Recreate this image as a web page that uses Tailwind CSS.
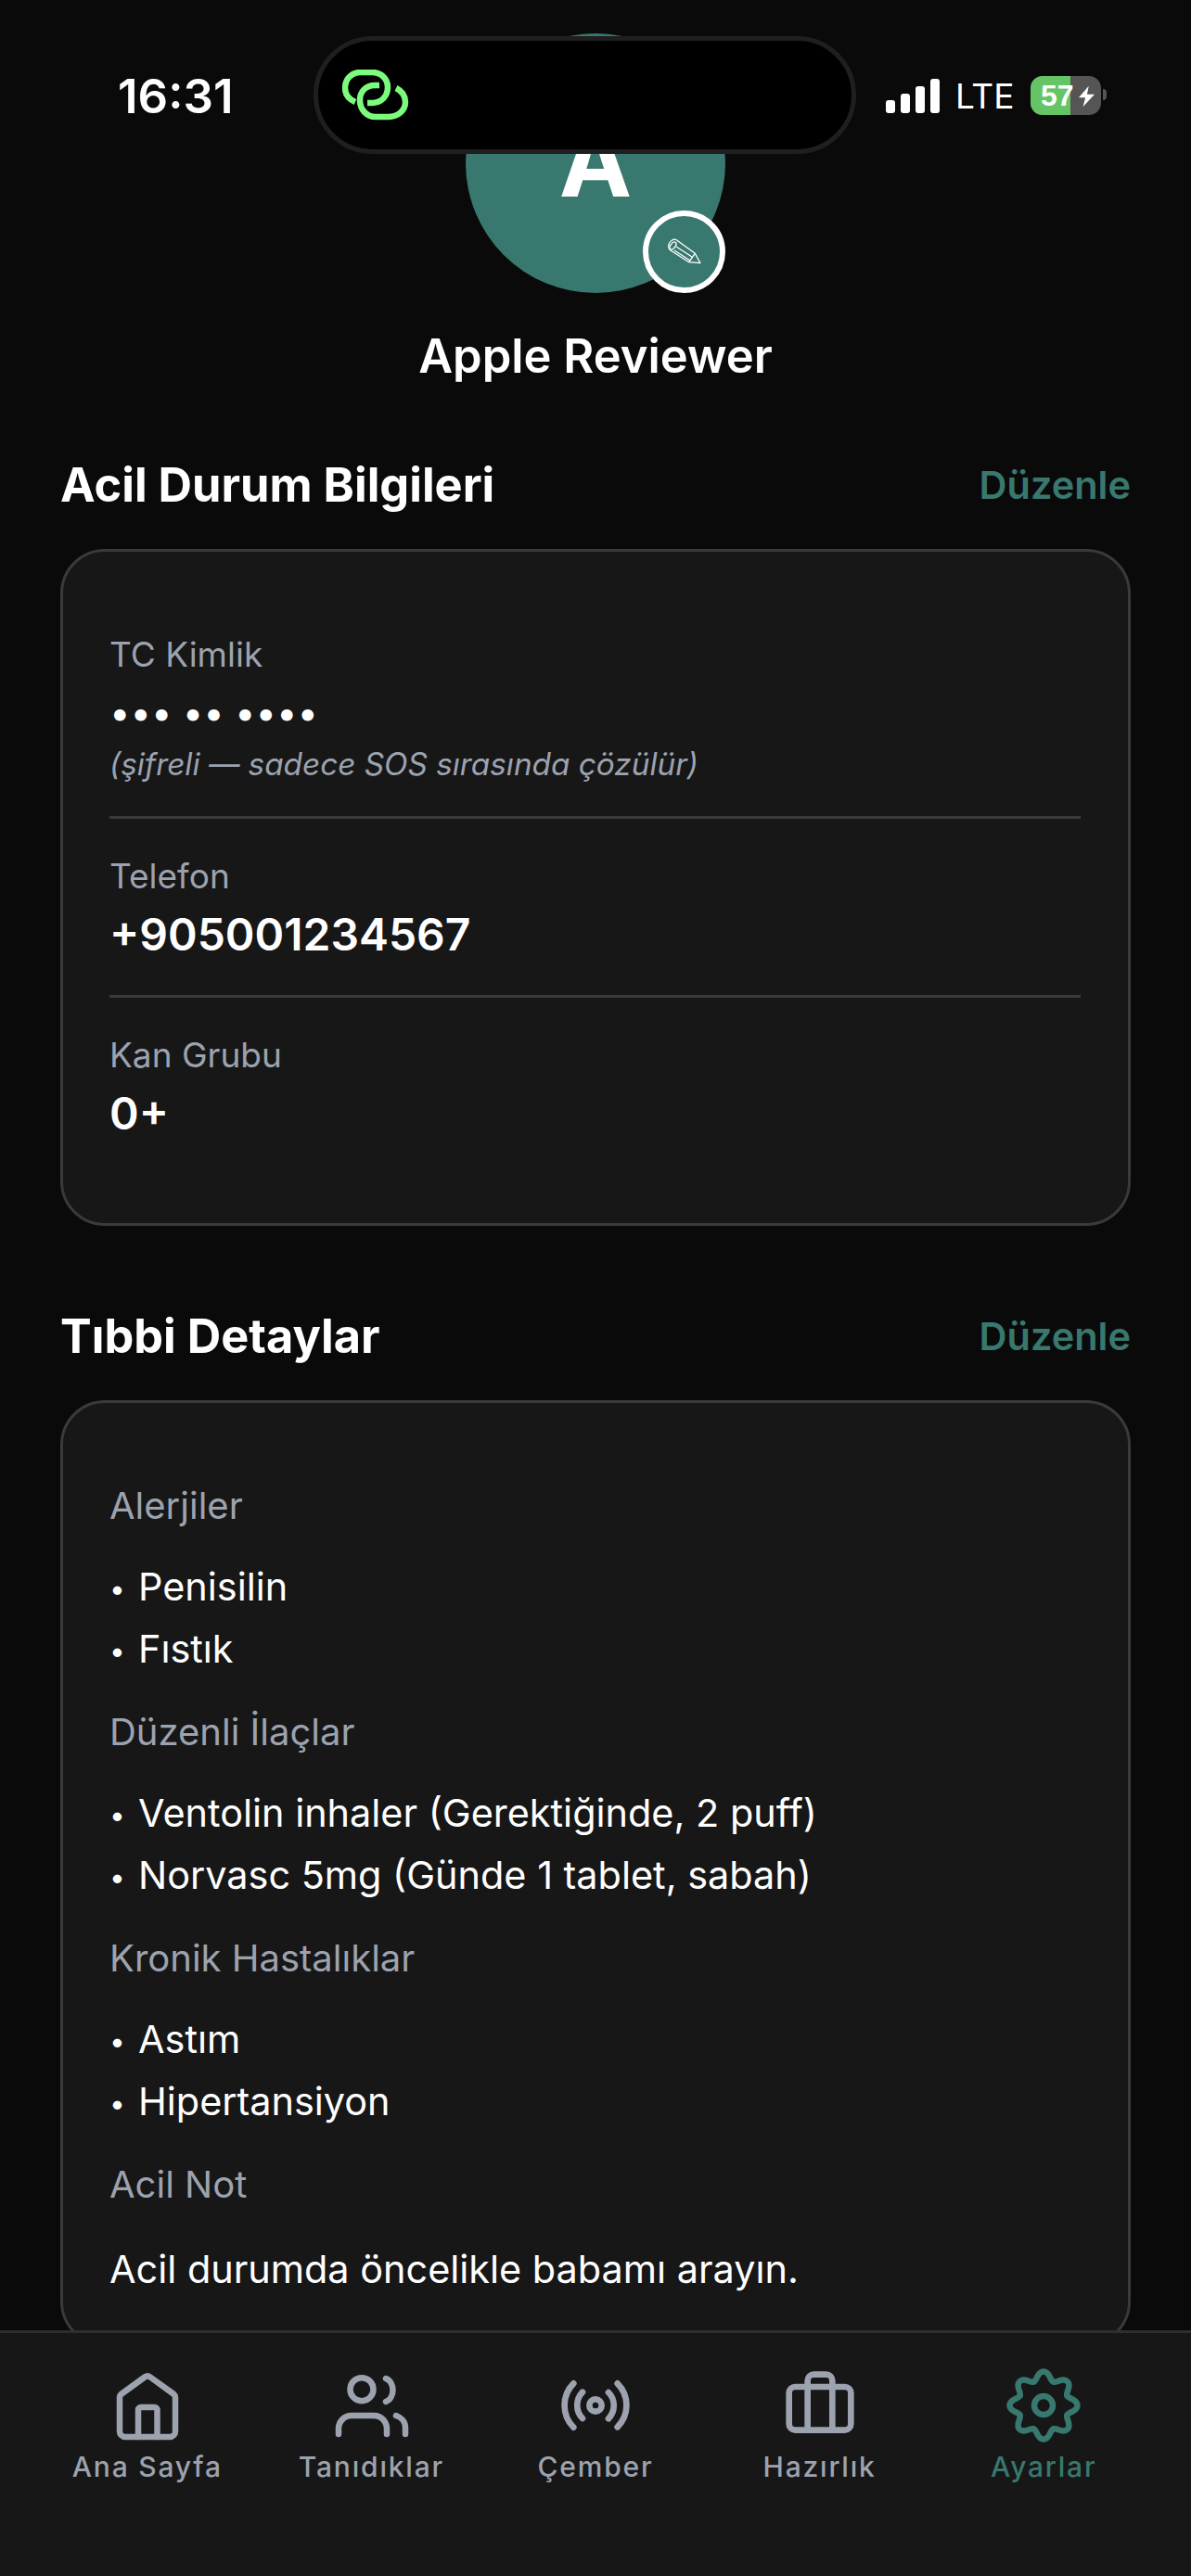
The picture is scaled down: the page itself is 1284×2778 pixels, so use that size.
<!DOCTYPE html>
<html lang="tr">
<head>
<meta charset="UTF-8">
<meta name="viewport" content="width=device-width, initial-scale=1.0">
<title>Ayarlar</title>
<script src="https://cdn.jsdelivr.net/npm/@tailwindcss/browser@4"></script>
</head>
<body class="bg-[#0a0a0a]">
<div class="relative w-[1284px] h-[2778px] overflow-hidden bg-[#0a0a0a] text-white font-['Inter',sans-serif]">

  <!-- status bar -->
  <div class="absolute top-0 left-0 w-full h-[170px] z-20">
    <div class="absolute left-[127px] top-[78px] text-[51px] leading-[52px] font-semibold">16:31</div>
    <div class="absolute left-[338px] top-[39px] w-[585px] h-[127px] rounded-[64px] bg-black border-[5px] border-[#1f1f1f] flex items-center pl-[26px]">
      <svg class="w-[72px] h-[56px]" viewBox="0 0 72 56" fill="none" stroke="#7cfb7c" stroke-width="6.5" stroke-linecap="butt">
        <path d="M14 35 C7 32 3 27 3 20 C3 10 10 3 20 3 H32 C42 3 49 10 49 19 C49 29 42 36 32 36 H27"/>
        <path d="M40 17 H35 C25 17 19 24 19 33 C19 43 26 51 36 51 H50 C60 51 68 44 68 35 C68 27 64 23 58 20"/>
      </svg>
    </div>
    <div class="absolute left-[955px] top-[85px] flex items-end gap-[6px] h-[37px]">
      <div class="w-[10px] h-[14px] bg-white rounded-[3px]"></div>
      <div class="w-[10px] h-[21px] bg-white rounded-[3px]"></div>
      <div class="w-[10px] h-[29px] bg-white rounded-[3px]"></div>
      <div class="w-[10px] h-[37px] bg-white rounded-[3px]"></div>
    </div>
    <div class="absolute left-[1030px] top-[84px] text-[37px] leading-[40px] font-normal">LTE</div>
    <div class="absolute left-[1111px] top-[82px] w-[76px] h-[42px] rounded-[13px] bg-[#555] overflow-hidden">
      <div class="absolute left-0 top-0 h-full w-[43px] bg-[#65c466]"></div>
      <div class="absolute left-[11px] top-0 text-[32px] leading-[42px] font-bold font-['Liberation_Sans',sans-serif]">57</div>
      <svg class="absolute left-[52px] top-[10px] w-[17px] h-[24px]" viewBox="0 0 19 25" fill="#fff"><path d="M12 0 L0 14 H8 L5 25 L19 10 H10 Z"/></svg>
    </div>
    <div class="absolute left-[1189px] top-[96px] w-[4px] h-[12px] rounded-r-full bg-[#555]"></div>
  </div>

  <!-- scroll content -->
  <main class="pt-[36px]">
    <div class="flex flex-col items-center">
      <div class="relative w-[280px] h-[280px] rounded-full bg-[#38786e] flex items-center justify-center">
        <span class="pb-[6px] text-[105px] font-bold leading-none">A</span>
        <div class="absolute right-0 bottom-0 w-[89px] h-[89px] rounded-full bg-[#38786e] border-[6px] border-white flex items-center justify-center">
          <svg class="w-[44px] h-[32px]" viewBox="0 0 44 32" fill="none" stroke="#fff" stroke-width="1.3" stroke-linejoin="round">
            <path d="M13.3 2.7 L33.3 17.3 L39 27.7 L26.7 26.7 L7 14 C3 11 5 5 8 3.5 C10 2 12 2 13.3 2.7 Z"/>
            <ellipse cx="9.5" cy="9" rx="2.6" ry="4.6" transform="rotate(35 9.5 9)"/>
            <path d="M13 10 L30 21 M11 14 L28 25 M33.3 17.3 L26.7 26.7"/>
          </svg>
        </div>
      </div>
      <h1 class="mt-[38px] text-[50.7px] leading-[60px] font-semibold">Apple Reviewer</h1>
    </div>

    <section class="px-[65px] mt-[74px]">
      <div class="flex items-center justify-between h-[70px]">
        <h2 class="text-[50.5px] font-bold">Acil Durum Bilgileri</h2>
        <span class="text-[41.5px] font-semibold text-[#38786e]">Düzenle</span>
      </div>
      <div class="mt-[34px] rounded-[48px] border-[3px] border-[#3a3a3a] bg-[#171717] pl-[50px] pr-[51px] pt-[89px] pb-[88px]">
        <p class="text-[37px] leading-[44px] text-[#9ca3af]">TC Kimlik</p>
        <p class="mt-[15px] text-[40px] leading-[52px] font-normal">••• •• ••••</p>
        <p class="mt-[9px] text-[33.3px] leading-[40px] italic text-[#9ca3af]">(şifreli — sadece SOS sırasında çözülür)</p>
        <div class="mt-[36px] h-[3px] bg-[#3a3a3a]"></div>
        <p class="mt-[40px] text-[37px] leading-[44px] text-[#9ca3af]">Telefon</p>
        <p class="mt-[11px] text-[48px] leading-[60px] font-semibold">+905001234567</p>
        <div class="mt-[35px] h-[3px] bg-[#3a3a3a]"></div>
        <p class="mt-[40px] text-[37px] leading-[44px] text-[#9ca3af]">Kan Grubu</p>
        <p class="mt-[11px] text-[48px] leading-[60px] font-semibold">0+</p>
      </div>
    </section>

    <section class="px-[65px] mt-[84px]">
      <div class="flex items-center justify-between h-[70px]">
        <h2 class="text-[50.5px] font-bold">Tıbbi Detaylar</h2>
        <span class="text-[41.5px] font-semibold text-[#38786e]">Düzenle</span>
      </div>
      <div class="mt-[34px] rounded-[48px] border-[3px] border-[#3a3a3a] bg-[#171717] pl-[50px] pr-[51px] pt-[89px] pb-[46px]">
        <p class="text-[40px] leading-[44px] text-[#9ca3af]">Alerjiler</p>
        <ul class="mt-[32px] text-[41.4px] leading-[67px]">
          <li><span class="inline-block w-[31px] text-[30px] leading-none align-[2px]">•</span>Penisilin</li>
          <li><span class="inline-block w-[31px] text-[30px] leading-none align-[2px]">•</span>Fıstık</li>
        </ul>
        <p class="mt-[34px] text-[40px] leading-[44px] text-[#9ca3af]">Düzenli İlaçlar</p>
        <ul class="mt-[32px] text-[41.4px] leading-[67px]">
          <li><span class="inline-block w-[31px] text-[30px] leading-none align-[2px]">•</span>Ventolin inhaler (Gerektiğinde, 2 puff)</li>
          <li><span class="inline-block w-[31px] text-[30px] leading-none align-[2px]">•</span>Norvasc 5mg (Günde 1 tablet, sabah)</li>
        </ul>
        <p class="mt-[34px] text-[40px] leading-[44px] text-[#9ca3af]">Kronik Hastalıklar</p>
        <ul class="mt-[32px] text-[41.4px] leading-[67px]">
          <li><span class="inline-block w-[31px] text-[30px] leading-none align-[2px]">•</span>Astım</li>
          <li><span class="inline-block w-[31px] text-[30px] leading-none align-[2px]">•</span>Hipertansiyon</li>
        </ul>
        <p class="mt-[34px] text-[40px] leading-[44px] text-[#9ca3af]">Acil Not</p>
        <p class="mt-[36px] text-[41.4px] leading-[67px]">Acil durumda öncelikle babamı arayın.</p>
      </div>
    </section>
  </main>

  <!-- tab bar -->
  <nav class="absolute left-0 bottom-0 w-full h-[265px] bg-[#171717] border-t-[3px] border-[#2e2e2e] z-10 grid grid-cols-5 px-[38px] pt-[36px]">
    <div class="flex flex-col items-center text-[#9ca3af]">
      <svg class="w-[84px] h-[84px]" viewBox="0 0 84 84" fill="none" stroke="currentColor" stroke-width="6.5" stroke-linecap="round" stroke-linejoin="round"><path d="M12 33 a4 4 0 0 1 1.5-3 L39 11.5 a5 5 0 0 1 6 0 L70.5 30 a4 4 0 0 1 1.5 3 V70 a6 6 0 0 1-6 6 H18 a6 6 0 0 1-6-6 Z"/><path d="M32 76 V47 a3 3 0 0 1 3-3 H49.5 a3 3 0 0 1 3 3 V76"/></svg>
      <span class="mt-[4px] text-[30px] leading-[40px] font-medium tracking-[1.8px]">Ana Sayfa</span>
    </div>
    <div class="flex flex-col items-center text-[#9ca3af]">
      <svg class="w-[84px] h-[84px]" viewBox="0 0 84 84" fill="none" stroke="currentColor" stroke-width="6.5" stroke-linecap="round" stroke-linejoin="round"><circle cx="32" cy="24.7" r="12.5"/><path d="M58 13 C68 17 68 34 58 38"/><path d="M7 73 V67 a14 14 0 0 1 14-14 H45 a14 14 0 0 1 14 14 V73"/><path d="M69 53 C75 55 79 60 79 66 V73"/></svg>
      <span class="mt-[4px] text-[30px] leading-[40px] font-medium tracking-[1.8px]">Tanıdıklar</span>
    </div>
    <div class="flex flex-col items-center text-[#9ca3af]">
      <svg class="w-[84px] h-[84px] p-[2px]" viewBox="0 0 24 24" fill="none" stroke="currentColor" stroke-width="2" stroke-linecap="round" stroke-linejoin="round"><path d="M4.9 19.1C1 15.2 1 8.8 4.9 4.9"/><path d="M7.8 16.2c-2.3-2.3-2.3-6.1 0-8.5"/><circle cx="12" cy="12" r="2"/><path d="M16.2 7.8c2.3 2.3 2.3 6.1 0 8.5"/><path d="M19.1 4.9C23 8.8 23 15.1 19.1 19"/></svg>
      <span class="mt-[4px] text-[30px] leading-[40px] font-medium tracking-[1.8px]">Çember</span>
    </div>
    <div class="flex flex-col items-center text-[#9ca3af]">
      <svg class="w-[84px] h-[84px] p-[2px]" viewBox="0 0 24 24" fill="none" stroke="currentColor" stroke-width="2" stroke-linecap="round" stroke-linejoin="round"><path d="M16 20V4a2 2 0 0 0-2-2h-4a2 2 0 0 0-2 2v16"/><rect x="2" y="6" width="20" height="14" rx="2"/></svg>
      <span class="mt-[4px] text-[30px] leading-[40px] font-medium tracking-[1.8px]">Hazırlık</span>
    </div>
    <div class="flex flex-col items-center text-[#38786e]">
      <svg class="w-[84px] h-[84px]" viewBox="-42 -42 84 84" fill="none" stroke="currentColor" stroke-width="6.5" stroke-linecap="round" stroke-linejoin="round">
        <path d="M-10.5 -25.4 C-6.8 -26.9 -7 -36.5 0 -36.5 C7 -36.5 6.8 -26.9 10.5 -25.4"/>
        <path transform="rotate(45)" d="M-10.5 -25.4 C-6.8 -26.9 -7 -36.5 0 -36.5 C7 -36.5 6.8 -26.9 10.5 -25.4"/>
        <path transform="rotate(90)" d="M-10.5 -25.4 C-6.8 -26.9 -7 -36.5 0 -36.5 C7 -36.5 6.8 -26.9 10.5 -25.4"/>
        <path transform="rotate(135)" d="M-10.5 -25.4 C-6.8 -26.9 -7 -36.5 0 -36.5 C7 -36.5 6.8 -26.9 10.5 -25.4"/>
        <path transform="rotate(180)" d="M-10.5 -25.4 C-6.8 -26.9 -7 -36.5 0 -36.5 C7 -36.5 6.8 -26.9 10.5 -25.4"/>
        <path transform="rotate(225)" d="M-10.5 -25.4 C-6.8 -26.9 -7 -36.5 0 -36.5 C7 -36.5 6.8 -26.9 10.5 -25.4"/>
        <path transform="rotate(270)" d="M-10.5 -25.4 C-6.8 -26.9 -7 -36.5 0 -36.5 C7 -36.5 6.8 -26.9 10.5 -25.4"/>
        <path transform="rotate(315)" d="M-10.5 -25.4 C-6.8 -26.9 -7 -36.5 0 -36.5 C7 -36.5 6.8 -26.9 10.5 -25.4"/>
        <circle cx="0" cy="0" r="10"/>
      </svg>
      <span class="mt-[4px] text-[30px] leading-[40px] font-medium tracking-[1.8px]">Ayarlar</span>
    </div>
  </nav>
</div>
</body>
</html>
